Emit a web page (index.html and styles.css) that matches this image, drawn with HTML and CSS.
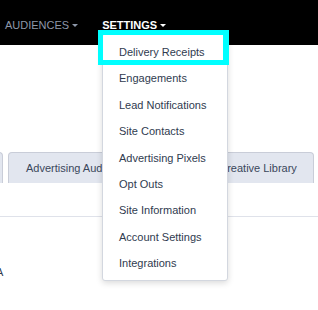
FILE: index.html
```html
<!DOCTYPE html>
<html lang="en">
<head>
  <meta charset="UTF-8" />
  <meta name="viewport" content="width=device-width, initial-scale=1" />
  <title>Settings</title>
  <link rel="stylesheet" href="styles.css">
</head>
<body>
  <header class="topbar">
    <nav class="nav">
      <a class="nav-item">AUDIENCES <span class="caret"></span></a>
      <a class="nav-item active">SETTINGS <span class="caret"></span></a>
    </nav>
  </header>

  <main class="page">
    <div class="tabs">
      <div class="tab tab-cut">Reports</div>
      <div class="tab">Advertising Audiences</div>
      <div class="tab tab-narrow">Ads</div>
      <div class="tab">Creative Library</div>
    </div>
    <div class="tab-body"></div>
    <p class="row-text">A</p>
  </main>

  <ul class="dropdown" role="menu">
    <li class="menu-item">Delivery Receipts</li>
    <li class="menu-item">Engagements</li>
    <li class="menu-item">Lead Notifications</li>
    <li class="menu-item">Site Contacts</li>
    <li class="menu-item">Advertising Pixels</li>
    <li class="menu-item">Opt Outs</li>
    <li class="menu-item">Site Information</li>
    <li class="menu-item">Account Settings</li>
    <li class="menu-item">Integrations</li>
  </ul>
  <div class="focus-ring"></div>
</body>
</html>
```

FILE: styles.css
```css
body {
  margin: 0;
  font-family: 'Liberation Sans', Arial, sans-serif;
  background-color: #fff;
  color: #2f3b4f;
  width: 318px;
  height: 310px;
  overflow: hidden;
  position: relative;
}
.topbar {
  background-color: #000;
  height: 45px;
  box-sizing: border-box;
  padding: 18px 0 0 5px;
}
.nav {
  display: flex;
  gap: 24px;
}
.nav-item {
  font-size: 11px;
  line-height: 14px;
  color: #8d97a9;
  display: flex;
  align-items: center;
  gap: 3px;
}
.nav-item.active {
  color: #fff;
  font-weight: 700;
}
.caret {
  width: 0;
  height: 0;
  border-top: 3px solid currentColor;
  border-left: 3px solid transparent;
  border-right: 3px solid transparent;
  margin-top: 1px;
}
.page {
  padding-top: 107px;
}
.tabs {
  display: flex;
  gap: 5px;
  margin-left: -62px;
  white-space: nowrap;
  overflow: hidden;
}
.tab {
  flex: none;
  height: 31px;
  box-sizing: border-box;
  padding: 9px 16px 0 17px;
  font-size: 11px;
  line-height: 13px;
  color: #3a475b;
  background-color: #e2e6ef;
  border: 1px solid #c9cdd8;
  border-bottom: none;
  border-radius: 4px 4px 0 0;
}
.tab-cut {
  width: 65px;
  overflow: hidden;
}
.tab-narrow {
  width: 40px;
  padding: 9px 8px 0;
  overflow: hidden;
}
.tab-body {
  height: 33px;
  border-bottom: 1px solid #dfe2ea;
}
.row-text {
  margin: 49px 0 0 -4px;
  font-size: 11px;
  line-height: 13px;
  color: #2f3b4f;
}
.dropdown {
  position: absolute;
  top: 33px;
  left: 102px;
  width: 126px;
  box-sizing: border-box;
  margin: 0;
  padding: 5px 0 3px;
  list-style: none;
  background-color: #fff;
  border: 1px solid #d3d7df;
  border-radius: 3px;
  box-shadow: 0 2px 6px rgba(0, 0, 0, 0.15);
}
.menu-item {
  padding: 6px 15px 6px 16px;
  font-size: 11px;
  line-height: 14.4px;
  color: #2f3b4f;
  white-space: nowrap;
}
.focus-ring {
  position: absolute;
  top: 30px;
  left: 98px;
  width: 131px;
  height: 35px;
  box-sizing: border-box;
  border: 5px solid #00ffff;
  border-right-width: 6px;
}
```
